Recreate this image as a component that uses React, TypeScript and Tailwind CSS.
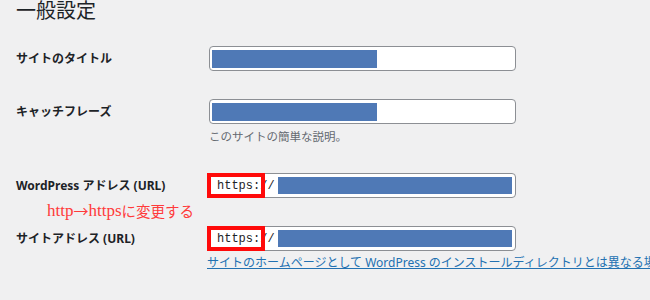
import React from "react";

const sans = { fontFamily: '"Noto Sans", "Noto Sans CJK JP", sans-serif' };

function Label({ children }: { children: React.ReactNode }) {
  return (
    <div className="w-[193px] shrink-0 text-[12px] font-bold leading-[16px] text-[#1d2327]">
      {children}
    </div>
  );
}

function TextBox() {
  return (
    <div className="flex h-[25px] w-[307px] items-center rounded-[4px] border border-[#8c8f94] bg-white pl-[2px]">
      <div className="h-[18px] w-[165px] bg-[#4f79b6]" />
    </div>
  );
}

function UrlBox() {
  return (
    <div className="relative flex h-[25px] w-[307px] items-center rounded-[4px] border border-[#8c8f94] bg-white pl-[7px] pr-[3px]">
      <span className="text-[12px] leading-[16px] text-[#1d2327] [font-family:'Liberation_Mono',monospace]">
        https://
      </span>
      <div className="ml-[3px] h-[17px] flex-1 bg-[#4f79b6]" />
      <div className="absolute left-[-3px] top-[-1px] h-[25px] w-[58px] border-4 border-[#ff0a0a]" />
    </div>
  );
}

export default function App() {
  return (
    <div className="h-[300px] w-[650px] overflow-hidden bg-[#f0f0f1]" style={sans}>
      <div className="pl-[16px]">
        <h1 className="h-[21px] text-[20px] font-normal leading-[21px] text-[#1d2327]">一般設定</h1>

        <div className="mt-[25px] flex items-center">
          <Label>サイトのタイトル</Label>
          <TextBox />
        </div>

        <div className="mt-[28px] flex items-center">
          <Label>キャッチフレーズ</Label>
          <TextBox />
        </div>
        <p className="ml-[193px] mt-[5px] text-[11.5px] leading-[16px] text-[#646970]">
          このサイトの簡単な説明。
        </p>

        <div className="mt-[28px] flex items-center">
          <Label>WordPress アドレス (URL)</Label>
          <UrlBox />
        </div>

        <div className="ml-[31px] mt-[3px] flex h-[20px] items-center whitespace-nowrap leading-[20px] text-[#ff3b3b]">
          <span className="text-[17px] [font-family:'Liberation_Serif',serif]">http</span>
          <span className="text-[15px] [font-family:'Noto_Sans_CJK_JP',sans-serif]">→</span>
          <span className="text-[17px] [font-family:'Liberation_Serif',serif]">https</span>
          <span className="text-[14.5px] [font-family:'Noto_Sans_CJK_JP',sans-serif]">に変更する</span>
        </div>

        <div className="mt-[5px] flex items-center">
          <Label>サイトアドレス (URL)</Label>
          <UrlBox />
        </div>

        <div className="ml-[191px] mt-[4px] whitespace-nowrap text-[12px] leading-[16px]">
          <a className="text-[#2271b1] underline" href="#">
            サイトのホームページとして WordPress のインストールディレクトリとは異なる場所を設定する場合は、ここにアドレスを入力してください。
          </a>
        </div>
      </div>
    </div>
  );
}
